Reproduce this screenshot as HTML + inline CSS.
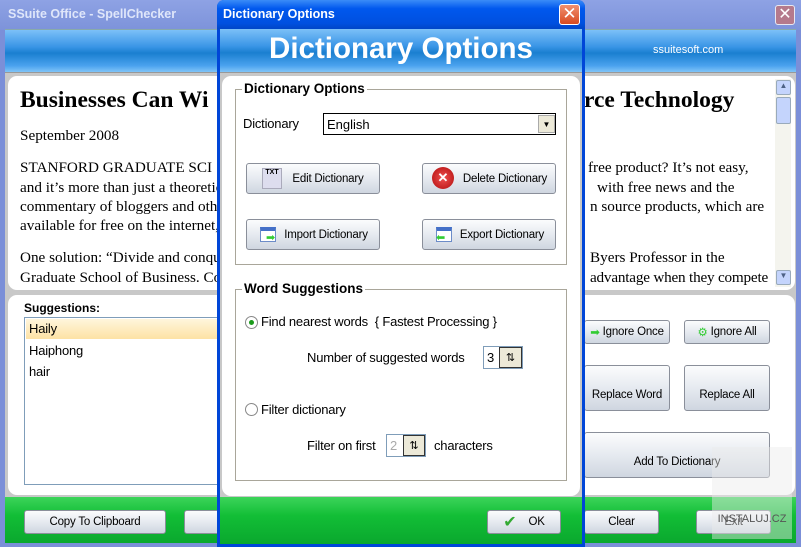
<!DOCTYPE html>
<html><head><style>
*{margin:0;padding:0;box-sizing:border-box}
body{width:801px;height:547px;overflow:hidden;position:relative;background:#c8c8c8;font-family:"Liberation Sans",sans-serif}
.abs{position:absolute}
.hdr{background:linear-gradient(#7cc0f8,#3a95e6 40%,#1a7fd0 55%,#4aa2ee 85%,#80c4f8)}
.ser{font-family:"Liberation Serif",serif;font-size:15.2px;color:#000;white-space:nowrap;position:absolute}
.btn{position:absolute;border:1px solid #8a8f9a;border-radius:3px;background:linear-gradient(#fbfcfd,#e6eaf0 50%,#cfd6e0);font-size:11.5px;color:#000;white-space:nowrap;display:flex;align-items:center;justify-content:center;letter-spacing:-0.2px}
.green{background:linear-gradient(#3cd45a,#12be36 40%,#0aa82e)}
.grp{position:absolute;border:1px solid #a9a69a}
.grp .lg{position:absolute;top:-9px;left:6px;background:#fff;padding:0 2px;font-size:13.5px;font-weight:bold;color:#000}
.t{position:absolute;font-size:13px;color:#000;white-space:nowrap;letter-spacing:-0.2px}
</style></head><body>
<div class="abs" style="left:0;top:0;width:801px;height:547px;background:#7b8fd8"></div>
<div class="abs" style="left:0;top:0;width:801px;height:30px;background:linear-gradient(#8ea2e4,#7d93da)"></div>
<div class="abs" style="left:8px;top:7px;color:#dfe6fa;font-weight:bold;font-size:12.5px">SSuite Office - SpellChecker</div>
<div class="abs" style="left:775px;top:5px;width:20px;height:20px;border:1px solid #e8e8f0;border-radius:3px;background:#b57a8c;color:#fff;font-size:16px;line-height:17px;text-align:center">✕</div>
<div class="abs" style="left:5px;top:29px;width:791px;height:514px;background:#c8c8c8"></div>
<div class="abs hdr" style="left:5px;top:29px;width:791px;height:44px;border-top:1px solid #8aa;border-bottom:1px solid #999"></div>
<div class="abs" style="left:653px;top:44px;color:#fff;font-size:11px">ssuitesoft.com</div>
<div class="abs" style="left:8px;top:76px;width:787px;height:214px;background:#fff;border-radius:9px"></div>
<div class="ser" style="left:20px;top:87px;font-size:23.5px;font-weight:bold">Businesses Can Wi</div>
<div class="ser" style="left:584px;top:87px;font-size:23.5px;font-weight:bold">rce Technology</div>
<div class="ser" style="left:20px;top:127px">September 2008</div>
<div class="ser" style="left:20px;top:159px">STANFORD GRADUATE SCI</div>
<div class="ser" style="left:20px;top:179px">and it’s more than just a theoretic</div>
<div class="ser" style="left:20px;top:198px">commentary of bloggers and oth</div>
<div class="ser" style="left:20px;top:217px">available for free on the internet,</div>
<div class="ser" style="left:20px;top:249px">One solution: “Divide and conqu</div>
<div class="ser" style="left:20px;top:269px">Graduate School of Business. Co</div>
<div class="ser" style="left:588px;top:159px">free product? It’s not easy,</div>
<div class="ser" style="left:597px;top:179px">with free news and the</div>
<div class="ser" style="left:590px;top:198px">n source products, which are</div>
<div class="ser" style="left:590px;top:249px">Byers Professor in the</div>
<div class="ser" style="left:590px;top:269px;letter-spacing:-0.2px">advantage when they compete</div>
<div class="abs" style="left:775px;top:79px;width:16px;height:208px;background:#f4f4ee"></div>
<div class="abs" style="left:776px;top:80px;width:15px;height:15px;background:#c4d4fc;border:1px solid #9ab;border-radius:2px;font-size:8px;text-align:center;color:#4d6185">▲</div>
<div class="abs" style="left:776px;top:97px;width:15px;height:27px;background:#c4d4fc;border:1px solid #9ab;border-radius:2px"></div>
<div class="abs" style="left:776px;top:270px;width:15px;height:15px;background:#c4d4fc;border:1px solid #9ab;border-radius:2px;font-size:8px;text-align:center;color:#4d6185">▼</div>
<div class="abs" style="left:8px;top:295px;width:787px;height:200px;background:#fff;border-radius:9px"></div>
<div class="abs" style="left:24px;top:301px;font-size:12px;font-weight:bold">Suggestions:</div>
<div class="abs" style="left:24px;top:317px;width:200px;height:168px;border:1px solid #7f9db9;background:#fff"></div>
<div class="abs" style="left:26px;top:319px;width:198px;height:20px;background:linear-gradient(#fff6dc,#fde2a4)"></div>
<div class="t" style="left:29px;top:321px">Haily</div>
<div class="t" style="left:29px;top:343px">Haiphong</div>
<div class="t" style="left:29px;top:364px">hair</div>
<div class="btn" style="left:584px;top:320px;width:86px;height:24px"><span style="color:#3c3;margin-right:3px">➡</span>Ignore Once</div>
<div class="btn" style="left:684px;top:320px;width:86px;height:24px"><span style="color:#3c3;margin-right:3px">⚙</span>Ignore All</div>
<div class="btn" style="left:584px;top:365px;width:86px;height:46px;padding-top:14px">Replace Word</div>
<div class="btn" style="left:684px;top:365px;width:86px;height:46px;padding-top:14px">Replace All</div>
<div class="btn" style="left:584px;top:432px;width:186px;height:46px;padding-top:14px">Add To Dictionary</div>
<div class="abs green" style="left:5px;top:497px;width:791px;height:46px"></div>
<div class="btn" style="left:24px;top:510px;width:142px;height:24px">Copy To Clipboard</div>
<div class="btn" style="left:184px;top:510px;width:40px;height:24px"></div>
<div class="btn" style="left:584px;top:510px;width:75px;height:24px">Clear</div>
<div class="btn" style="left:696px;top:510px;width:75px;height:24px">Exit</div>
<div class="abs" style="left:712px;top:447px;width:80px;height:92px;background:rgba(235,235,235,.45);font-size:11px;color:#555;padding-top:66px;text-align:center">INSTALUJ.CZ</div>

<div class="abs" style="left:217px;top:0;width:368px;height:547px;background:#0046d8;border-radius:7px 7px 0 0"></div>
<div class="abs" style="left:217px;top:0;width:368px;height:29px;border-radius:7px 7px 0 0;background:linear-gradient(#3a8cf8,#0058ee 30%,#0050e0 80%,#0046c8)"></div>
<div class="abs" style="left:223px;top:7px;color:#fff;font-weight:bold;font-size:12.5px">Dictionary Options</div>
<div class="abs" style="left:559px;top:4px;width:21px;height:21px;border:1px solid #fff;border-radius:3px;background:linear-gradient(#f09070,#d84a20);color:#fff;font-size:17px;line-height:18px;text-align:center">✕</div>
<div class="abs" style="left:220px;top:29px;width:362px;height:515px;background:#c8c8c8"></div>
<div class="abs hdr" style="left:220px;top:29px;width:362px;height:44px;border-bottom:1px solid #999"></div>
<div class="abs" style="left:220px;top:32px;width:362px;text-align:center;color:#fff;font-weight:bold;font-size:29.5px">Dictionary Options</div>
<div class="abs" style="left:222px;top:76px;width:358px;height:420px;background:#fff;border-radius:9px"></div>
<div class="grp" style="left:235px;top:89px;width:332px;height:176px"><span class="lg">Dictionary Options</span></div>
<div class="t" style="left:243px;top:116px">Dictionary</div>
<div class="abs" style="left:323px;top:113px;width:233px;height:22px;border:1px solid #000;background:#fff;font-size:13px;padding:3px 3px">English</div>
<div class="abs" style="left:538px;top:115px;width:17px;height:18px;background:#ece9d8;border:1px solid #aaa;font-size:8px;text-align:center;line-height:18px">▼</div>
<div class="btn" style="left:246px;top:163px;width:134px;height:31px;padding-left:30px">Edit Dictionary</div>
<div class="abs" style="left:262px;top:168px;width:20px;height:21px;background:#dde;border:1px solid #aab;font-size:7px;font-weight:bold;text-align:center">TXT</div>
<div class="btn" style="left:422px;top:163px;width:134px;height:31px;padding-left:32px">Delete Dictionary</div>
<div class="abs" style="left:432px;top:167px;width:22px;height:22px;border-radius:50%;background:radial-gradient(#f05050,#b00c0c);color:#fff;font-size:13px;text-align:center;line-height:22px;font-weight:bold">✕</div>
<div class="btn" style="left:246px;top:219px;width:134px;height:31px;padding-left:26px">Import Dictionary</div>
<div class="abs" style="left:260px;top:227px;width:16px;height:15px;border:1px solid #6c8cc8;border-top:4px solid #4470c8;background:#fff"></div>
<div class="abs" style="left:266px;top:233px;color:#3c3;font-size:11px;line-height:10px">➡</div>
<div class="btn" style="left:422px;top:219px;width:134px;height:31px;padding-left:26px">Export Dictionary</div>
<div class="abs" style="left:436px;top:227px;width:16px;height:15px;border:1px solid #6c8cc8;border-top:4px solid #4470c8;background:#fff"></div>
<div class="abs" style="left:436px;top:233px;color:#3c3;font-size:11px;line-height:10px">⬅</div>
<div class="grp" style="left:235px;top:289px;width:332px;height:192px"><span class="lg">Word Suggestions</span></div>
<div class="abs" style="left:245px;top:316px;width:13px;height:13px;border:1px solid #888;border-radius:50%;background:#fff"></div>
<div class="abs" style="left:249px;top:320px;width:5px;height:5px;border-radius:50%;background:#1a9a1a"></div>
<div class="t" style="left:261px;top:314px">Find nearest words &nbsp;{ Fastest Processing }</div>
<div class="t" style="left:307px;top:350px">Number of suggested words</div>
<div class="abs" style="left:483px;top:346px;width:40px;height:23px;border:1px solid #7f9db9;background:#fff;font-size:13px;padding:3px 3px">3</div>
<div class="abs" style="left:499px;top:347px;width:23px;height:21px;background:#ece9d8;border:1px solid #333;font-size:11px;text-align:center;line-height:20px">⇅</div>
<div class="abs" style="left:245px;top:403px;width:13px;height:13px;border:1px solid #888;border-radius:50%;background:#fff"></div>
<div class="t" style="left:261px;top:402px">Filter dictionary</div>
<div class="t" style="left:307px;top:438px">Filter on first</div>
<div class="abs" style="left:386px;top:434px;width:40px;height:23px;border:1px solid #7f9db9;background:#fff;font-size:13px;padding:3px 3px;color:#aaa">2</div>
<div class="abs" style="left:403px;top:435px;width:22px;height:21px;background:#ece9d8;border:1px solid #333;font-size:11px;text-align:center;line-height:20px">⇅</div>
<div class="t" style="left:434px;top:438px">characters</div>
<div class="abs green" style="left:220px;top:497px;width:362px;height:47px"></div>
<div class="btn" style="left:487px;top:510px;width:74px;height:24px"><span style="color:#3a3;font-size:16px;margin-right:12px">✔</span>OK</div>
</body></html>
